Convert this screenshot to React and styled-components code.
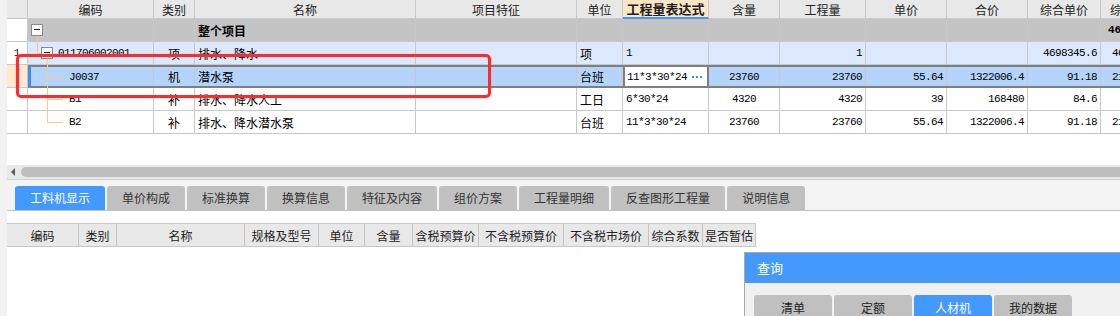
import React from 'react';
import styled, { createGlobalStyle, css } from 'styled-components';

const LINE = '#c8c8c8';
const BLUE = '#4499ff';
const COLS = '126px 41px 221px 161px 46px 86px 71px 86px 81px 81px 73px 67px';
const SUB_COLS = '72px 38px 128px 74px 46px 48px 66px 85px 85px 54px 53px';
const MONO = '"Liberation Mono", "Noto Sans CJK SC", monospace';
const CJK = '"Noto Sans CJK SC", sans-serif';

const GlobalStyle = createGlobalStyle`
  html, body { margin: 0; padding: 0; background: #fff; overflow: hidden; }
  body { font-family: ${CJK}; font-size: 12px; color: #111; }
`;

const Page = styled.div`
  position: relative;
  display: flex;
  width: 1120px;
  height: 316px;
  overflow: hidden;
`;

const Side = styled.div`
  width: 7px;
  flex: none;
  background: #f2f2f2;
`;

const Main = styled.div`
  flex: 1;
  min-width: 0;
  display: flex;
  flex-direction: column;
`;

const Grid = styled.div`
  position: relative;
  height: 165px;
`;

const Row = styled.div`
  display: flex;
  height: ${p => (p.$head ? 19 : 23)}px;
`;

const Num = styled.div`
  width: 21px;
  flex: none;
  box-sizing: border-box;
  border-right: 1px solid ${LINE};
  border-bottom: 1px solid ${LINE};
  background: ${p => p.$bg || '#fff'};
  display: flex;
  align-items: center;
  justify-content: center;
  font-family: ${MONO};
  font-size: 11px;
`;

const Body = styled.div`
  display: grid;
  flex: none;
  grid-template-columns: ${COLS};
  box-sizing: border-box;
  background: ${p => p.$bg || '#fff'};
  ${p => p.$selected && css`
    border-top: 2px solid #7f7f7f;
    border-bottom: 2px solid #7f7f7f;
  `}
`;

const Cell = styled.div`
  box-sizing: border-box;
  border-right: 1px solid ${LINE};
  border-bottom: ${p => (p.$flat ? 'none' : `1px solid ${LINE}`)};
  display: flex;
  align-items: center;
  justify-content: ${p => ({ left: 'flex-start', center: 'center', right: 'flex-end' }[p.$align] || 'flex-start')};
  padding: 0 ${p => (p.$padRight != null ? p.$padRight : 3)}px 0 ${p => (p.$indent != null ? p.$indent : 3)}px;
  gap: 5px;
  overflow: hidden;
  white-space: nowrap;
  font-family: ${p => (p.$mono ? MONO : CJK)};
  font-size: ${p => (p.$mono ? '11px' : '12px')};
  letter-spacing: ${p => (p.$mono ? (p.$bold ? '-0.15px' : '-0.6px') : '0')};
  font-weight: ${p => (p.$bold ? 700 : 400)};
  color: #000;
  ${p => p.$marker && css`box-shadow: inset 3px 0 #3d8fef;`}
  ${p => p.$edit && css`
    background: #fff;
    border-right: 2px solid #7f7f7f;
    box-shadow: inset 2px 0 #7f7f7f;
    justify-content: space-between;
    padding: 0 4px 0 4px;
  `}
`;

const HeadCell = styled.div`
  box-sizing: border-box;
  background: ${p => (p.$active ? '#fde6c8' : '#e8e8e8')};
  border-right: 1px solid ${LINE};
  border-bottom: ${p => (p.$active ? `2px solid ${BLUE}` : `1px solid ${LINE}`)};
  display: flex;
  align-items: center;
  justify-content: center;
  white-space: nowrap;
  overflow: hidden;
  font-size: ${p => (p.$active ? '13px' : '12px')};
  font-weight: ${p => (p.$active ? 700 : 400)};
  color: #222;
`;

const Toggle = styled.span`
  position: relative;
  flex: none;
  width: 12px;
  height: 12px;
  box-sizing: border-box;
  border: 1px solid #8a8a8a;
  background: #fafafa;
  &::after {
    content: '';
    position: absolute;
    left: 2px;
    right: 2px;
    top: 4px;
    height: 1px;
    background: #222;
  }
`;

const Dots = styled.span`
  display: flex;
  gap: 2px;
  margin-right: 2px;
  & > i {
    width: 2px;
    height: 2px;
    background: #3b8fe4;
  }
`;

const Tree = styled.svg`
  position: absolute;
  left: 21px;
  top: 0;
  pointer-events: none;
`;

const Scroll = styled.div`
  height: 15px;
  box-sizing: border-box;
  background: #e8e8e8;
  border-bottom: 1px solid #d0d0d0;
  padding: 2px 0;
  display: flex;
  align-items: center;
`;

const Arrow = styled.span`
  width: 0;
  height: 0;
  margin-left: 4px;
  border-top: 4px solid transparent;
  border-bottom: 4px solid transparent;
  border-right: 4px solid #5c5c5c;
`;

const Thumb = styled.div`
  flex: 1;
  height: 10px;
  margin-left: 6px;
  background: #bebebe;
  border-radius: 5px 0 0 5px;
`;

const TabBar = styled.div`
  height: 31px;
  box-sizing: border-box;
  background: #f3f3f3;
  border-bottom: 1px solid #c2c2c2;
  padding: 6px 0 0 8px;
  display: flex;
  gap: 2px;
`;

const Tab = styled.div`
  height: 24px;
  line-height: 24px;
  padding: 0 15px;
  border-radius: 3px 3px 0 0;
  background: ${p => (p.$active ? BLUE : '#c0c0c0')};
  color: ${p => (p.$active ? '#fff' : '#333')};
  font-size: 12px;
  white-space: nowrap;
`;

const SubHead = styled.div`
  align-self: flex-start;
  margin-top: 12px;
  display: grid;
  grid-template-columns: ${SUB_COLS};
  border-top: 1px solid ${LINE};
  border-bottom: 1px solid ${LINE};
`;

const SubCell = styled.div`
  height: 22px;
  box-sizing: border-box;
  background: #e8e8e8;
  border-right: 1px solid #c4c4c4;
  display: flex;
  align-items: center;
  justify-content: center;
  white-space: nowrap;
  font-size: 12px;
  color: #222;
`;

const Query = styled.div`
  position: absolute;
  left: 744px;
  top: 252px;
  width: 420px;
  height: 90px;
  box-sizing: border-box;
  border: 1px solid #a8a8a8;
  background: #f0f0f0;
`;

const QueryTitle = styled.div`
  height: 30px;
  line-height: 30px;
  padding-left: 12px;
  background: ${BLUE};
  color: #fff;
  font-size: 13px;
`;

const QueryTabs = styled.div`
  display: flex;
  gap: 2px;
  padding: 12px 0 0 9px;
`;

const QueryTab = styled.div`
  width: 78px;
  height: 26px;
  line-height: 26px;
  text-align: center;
  border-radius: 3px 3px 0 0;
  background: ${p => (p.$active ? BLUE : '#c0c0c0')};
  color: ${p => (p.$active ? '#fff' : '#222')};
  font-size: 12px;
`;

const Annotation = styled.div`
  position: absolute;
  left: 16px;
  top: 54px;
  width: 475px;
  height: 44px;
  box-sizing: border-box;
  border: 3px solid #ff2a2a;
  border-radius: 5px;
  box-shadow: 0 0 1px rgba(255, 0, 0, 0.6);
  pointer-events: none;
`;

const headers = ['编码', '类别', '名称', '项目特征', '单位', '工程量表达式', '含量', '工程量', '单价', '合价', '综合单价', '综合合价'];
const aligns = ['center', 'left', 'left', 'left', 'left', 'center', 'right', 'right', 'right', 'right', 'right'];
const monos = [false, false, false, false, true, true, true, true, true, true, true];

const rows = [
  { num: '', tone: '#c4c4c4', indent: 3, toggle: true, code: '', bold: true,
    values: ['', '整个项目', '', '', '', '', '', '', '', '', '4698345.6'] },
  { num: '1', tone: '#dce8fb', indent: 13, toggle: true, code: '011706002001',
    values: ['项', '排水、降水', '', '项', '1', '', '1', '', '', '4698345.6', '4698345.6'] },
  { num: '', tone: '#b4d4fb', numTone: '#fde8d0', indent: 41, code: 'J0037', selected: true,
    values: ['机', '潜水泵', '', '台班', '11*3*30*24', '23760', '23760', '55.64', '1322006.4', '91.18', '2166436.8'] },
  { num: '', indent: 41, code: 'B1',
    values: ['补', '排水、降水人工', '', '工日', '6*30*24', '4320', '4320', '39', '168480', '84.6', '365472'] },
  { num: '', indent: 41, code: 'B2',
    values: ['补', '排水、降水潜水泵', '', '台班', '11*3*30*24', '23760', '23760', '55.64', '1322006.4', '91.18', '2166436.8'] },
];

const tabs = ['工料机显示', '单价构成', '标准换算', '换算信息', '特征及内容', '组价方案', '工程量明细', '反查图形工程量', '说明信息'];
const subHeaders = ['编码', '类别', '名称', '规格及型号', '单位', '含量', '含税预算价', '不含税预算价', '不含税市场价', '综合系数', '是否暂估'];
const queryTabs = ['清单', '定额', '人材机', '我的数据'];

const TreeLines = () => (
  <Tree width="60" height="134">
    <g stroke="#fcc98a" strokeWidth="1" fill="none">
      <path d="M9.5 38 V53.5 H13" />
      <path d="M19.5 59 V122.5" />
      <path d="M19.5 76.5 H35" />
      <path d="M19.5 99.5 H35" />
      <path d="M19.5 122.5 H35" />
    </g>
  </Tree>
);

const DataRow = ({ row }) => (
  <Row>
    <Num $bg={row.numTone}>{row.num}</Num>
    <Body $bg={row.tone} $selected={row.selected}>
      <Cell $indent={row.indent} $mono $flat={row.selected} $marker={row.selected}>
        {row.toggle && <Toggle />}
        {row.code}
      </Cell>
      {row.values.map((v, i) => {
        const edit = row.selected && i === 4;
        return (
          <Cell
            key={i}
            $align={aligns[i]}
            $mono={monos[i]}
            $flat={row.selected}
            $edit={edit}
            $padRight={i === 10 ? 1 : undefined}
            $bold={row.bold && (i === 1 || i === 10)}
          >
            {v}
            {edit && <Dots><i /><i /><i /></Dots>}
          </Cell>
        );
      })}
    </Body>
  </Row>
);

export default function App() {
  return (
    <>
      <GlobalStyle />
      <Page>
        <Side />
        <Main>
          <Grid>
            <Row $head>
              <Num $bg="#e8e8e8" />
              <Body>
                {headers.map((h, i) => (
                  <HeadCell key={h} $active={i === 5}>{h}</HeadCell>
                ))}
              </Body>
            </Row>
            {rows.map((r, i) => (
              <DataRow key={i} row={r} />
            ))}
            <TreeLines />
          </Grid>
          <Scroll>
            <Arrow />
            <Thumb />
          </Scroll>
          <TabBar>
            {tabs.map((t, i) => (
              <Tab key={t} $active={i === 0}>{t}</Tab>
            ))}
          </TabBar>
          <SubHead>
            {subHeaders.map(h => (
              <SubCell key={h}>{h}</SubCell>
            ))}
          </SubHead>
        </Main>
        <Query>
          <QueryTitle>查询</QueryTitle>
          <QueryTabs>
            {queryTabs.map((t, i) => (
              <QueryTab key={t} $active={i === 2}>{t}</QueryTab>
            ))}
          </QueryTabs>
        </Query>
        <Annotation />
      </Page>
    </>
  );
}
